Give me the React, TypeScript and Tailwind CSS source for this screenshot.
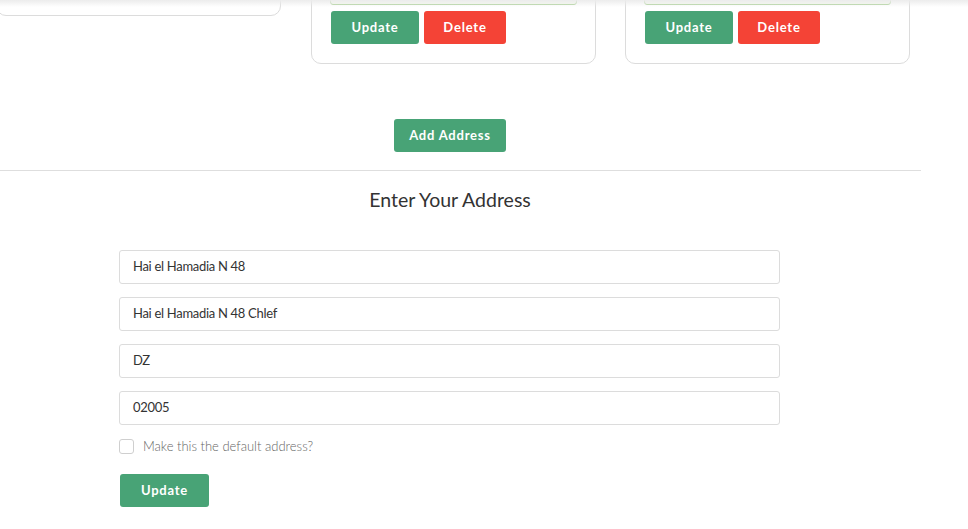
import React from 'react';

const btn = 'h-[33px] rounded-[3px] text-white text-[13px] font-bold tracking-[0.06em] flex items-center justify-center';

function AddressCard({ short }: { short?: boolean }) {
  return (
    <div
      className={`w-[285px] shrink-0 rounded-[10px] border border-[#dcdcdc] bg-white flex flex-col justify-end px-[18px] ${
        short ? 'h-[116px] pb-[18px]' : 'h-[164px] pb-[19px]'
      }`}
    >
      {!short && (
        <>
          <div className="h-[34px] rounded-[3px] border border-[#a9cf94] bg-[#f5faef]" />
          <div className="flex gap-[5px] mt-[6px] pl-[1px]">
            <button className={`${btn} w-[88px] bg-[#48a376]`}>Update</button>
            <button className={`${btn} w-[82px] bg-[#f44336]`}>Delete</button>
          </div>
        </>
      )}
    </div>
  );
}

const FIELDS = ['Hai el Hamadia N 48', 'Hai el Hamadia N 48 Chlef', 'DZ', '02005'];

export default function App() {
  return (
    <div className="relative w-[968px] h-[529px] overflow-hidden bg-white" style={{ fontFamily: 'Lato, "Open Sans", sans-serif' }}>
      {/* top shadow from header */}
      <div className="absolute top-0 left-0 right-0 h-[7px] bg-gradient-to-b from-[#ececec] to-transparent z-10" />

      {/* Cards row */}
      <div className="flex items-start gap-[30px] ml-[-4px] mt-[-100px]">
        <AddressCard short />
        <AddressCard />
        <div className="ml-[-1px]"><AddressCard /></div>
      </div>

      {/* Add address */}
      <div className="flex justify-center mt-[55px] w-[900px]">
        <button className={`${btn} w-[112px] h-[32px] bg-[#48a376]`}>Add Address</button>
      </div>

      <div className="w-[921px] h-px bg-[#dedede] mt-[18px]" />

      {/* Form */}
      <div className="w-[900px] flex flex-col items-center">
        <h2 className="text-[19.5px] text-[#333] mt-[17px] leading-[24px]">Enter Your Address</h2>
      </div>

      <div className="ml-[119px] w-[661px] mt-[38px] flex flex-col gap-[13px]">
        {FIELDS.map((f) => (
          <div
            key={f}
            className="h-[34px] rounded-[3px] border border-[#dcdcdc] flex items-center pl-[13px] text-[13px] tracking-[-0.3px] text-[#333]"
          >
            {f}
          </div>
        ))}
      </div>

      <div className="ml-[119px] mt-[13px] flex items-center gap-[9px] h-[16px]">
        <div className="w-[15px] h-[15px] rounded-[3px] border border-[#cfcfcf]" />
        <span className="text-[13px] leading-[16px] text-[#666] font-light">Make this the default address?</span>
      </div>

      <div className="ml-[120px] mt-[20px]">
        <button className={`${btn} w-[89px] bg-[#48a376]`}>Update</button>
      </div>
    </div>
  );
}
